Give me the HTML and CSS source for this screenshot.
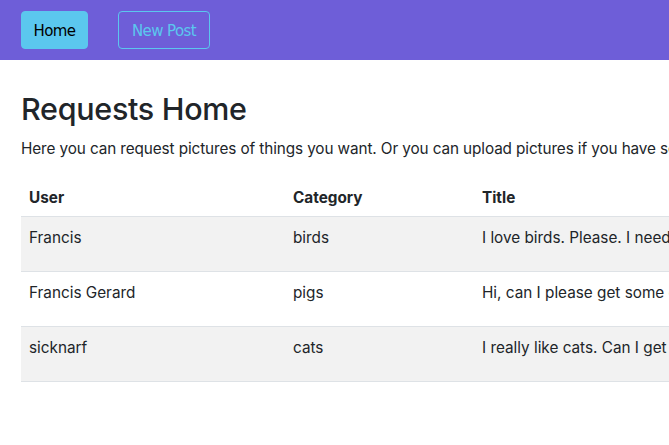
FILE: index.html
```html
<!DOCTYPE html>
<html>
<head>
<meta charset="utf-8">
<link rel="stylesheet" href="styles.css">
</head>
<body>
<nav class="navbar">
  <a class="btn btn-info">Home</a>
  <a class="btn btn-outline">New Post</a>
</nav>
<main class="content">
  <h1 class="title">Requests Home</h1>
  <p class="lead">Here you can request pictures of things you want. Or you can upload pictures if you have some that match a request.</p>
  <table class="table">
    <thead>
      <tr><th class="c-user">User</th><th class="c-cat">Category</th><th class="c-title">Title</th></tr>
    </thead>
    <tbody>
      <tr class="striped"><td>Francis</td><td>birds</td><td>I love birds. Please. I need pictures of birds of all kinds.</td></tr>
      <tr><td>Francis Gerard</td><td>pigs</td><td>Hi, can I please get some cute pictures of pigs?</td></tr>
      <tr class="striped"><td>sicknarf</td><td>cats</td><td>I really like cats. Can I get some cat pictures?</td></tr>
    </tbody>
  </table>
</main>
</body>
</html>
```
FILE: styles.css
```css
html, body {
  margin: 0;
  padding: 0;
  overflow: hidden;
  background: #fff;
}
body {
  font-family: Inter, "Noto Sans", sans-serif;
  color: #212529;
  font-size: 16px;
  line-height: 24px;
  width: 669px;
}
.navbar {
  background: #6e5ed8;
  height: 60px;
  box-sizing: border-box;
  padding: 11px 21px;
  display: flex;
  gap: 30px;
  align-items: flex-start;
}
.btn {
  font-family: "DejaVu Sans", sans-serif;
  font-size: 15px;
  letter-spacing: -0.6px;
  height: 38px;
  box-sizing: border-box;
  display: flex;
  align-items: center;
  justify-content: center;
  border-radius: 4px;
  border: 1px solid #5bc7ee;
  padding-top: 1px;
}
.btn-info {
  background: #5bc7ee;
  color: #000;
  width: 67px;
}
.btn-outline {
  background: transparent;
  color: #5bc7ee;
  width: 92px;
}
.content {
  padding: 0 21px;
}
.title {
  margin: 29px 0 0 0;
  font-size: 30.5px;
  line-height: 40px;
  font-weight: 500;
  letter-spacing: -0.3px;
}
.lead {
  margin: 8px 0 0 0;
  white-space: nowrap;
  font-size: 15.3px;
  letter-spacing: -0.1px;
}
.table {
  margin-top: 19px;
  border-collapse: collapse;
  width: 1100px;
}
.table th {
  text-align: left;
  font-weight: 700;
  height: 36px;
  padding: 0 8px;
  box-sizing: border-box;
  border-bottom: 1px solid #dee2e6;
  font-size: 15.3px;
}
.table td {
  height: 55px;
  padding: 9px 8px 0;
  box-sizing: border-box;
  vertical-align: top;
  border-bottom: 1px solid #dee2e6;
  white-space: nowrap;
  font-size: 15.3px;
}
.c-user { width: 264px; }
.c-cat { width: 189px; }
.striped td { background: #f2f2f2; }
```
